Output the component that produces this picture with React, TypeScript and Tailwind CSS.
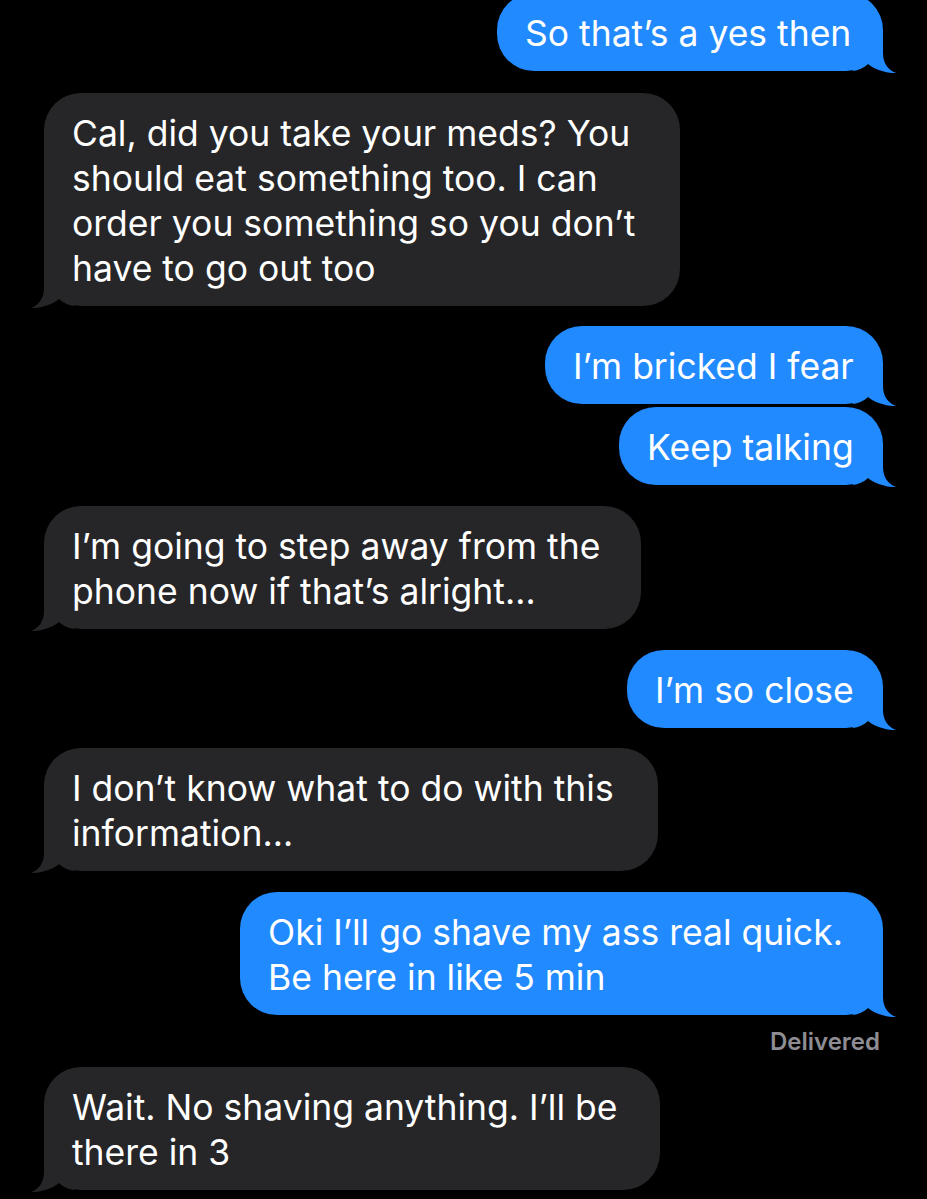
type Msg = {
  from: 'me' | 'them'
  lines: string[]
  width: string
  gap: string
}

const messages: Msg[] = [
  { from: 'me', lines: ['So that’s a yes then'], width: 'w-[386px]', gap: '-mt-[7px]' },
  {
    from: 'them',
    lines: [
      'Cal, did you take your meds? You',
      'should eat something too. I can',
      'order you something so you don’t',
      'have to go out too',
    ],
    width: 'w-[636px]',
    gap: 'mt-[22px]',
  },
  { from: 'me', lines: ['I’m bricked I fear'], width: 'w-[338px]', gap: 'mt-[20px]' },
  { from: 'me', lines: ['Keep talking'], width: 'w-[264px]', gap: 'mt-[3px]' },
  {
    from: 'them',
    lines: ['I’m going to step away from the', 'phone now if that’s alright…'],
    width: 'w-[597px]',
    gap: 'mt-[21px]',
  },
  { from: 'me', lines: ['I’m so close'], width: 'w-[256px]', gap: 'mt-[21px]' },
  {
    from: 'them',
    lines: ['I don’t know what to do with this', 'information…'],
    width: 'w-[614px]',
    gap: 'mt-[20px]',
  },
  {
    from: 'me',
    lines: ['Oki I’ll go shave my ass real quick.', 'Be here in like 5 min'],
    width: 'w-[643px]',
    gap: 'mt-[21px]',
  },
]

const last: Msg = {
  from: 'them',
  lines: ['Wait. No shaving anything. I’ll be', 'there in 3'],
  width: 'w-[616px]',
  gap: 'mt-[12px]',
}

function Tail({ me }: { me: boolean }) {
  // tail drawn over the bottom corner of the bubble
  return (
    <svg
      width="44"
      height="40"
      viewBox="0 0 44 40"
      className={
        me
          ? 'absolute -right-[14px] -bottom-[2px]'
          : 'absolute -left-[14px] -bottom-[2px] -scale-x-100'
      }
    >
      <path
        d="M0 0 H30 V20 C30 30 35 37 43 40 C36 40.5 21 37 15 31 C11 35 5 37.5 0 38 Z"
        fill={me ? '#218aff' : '#262628'}
      />
    </svg>
  )
}

function Bubble({ msg }: { msg: Msg }) {
  const me = msg.from === 'me'
  return (
    <div className={`flex ${me ? 'justify-end' : 'justify-start'} ${msg.gap}`}>
      <div
        className={`relative ${msg.width} rounded-[37px] pl-[28px] pt-[18px] pb-[15px] ${
          me ? 'bg-[#218aff]' : 'bg-[#262628]'
        }`}
      >
        <Tail me={me} />
        <div className="relative text-[35.5px] leading-[45px] text-white">
          {msg.lines.map((l, i) => (
            <div key={i} className="whitespace-nowrap">
              {l}
            </div>
          ))}
        </div>
      </div>
    </div>
  )
}

export default function App() {
  return (
    <div
      className="h-[1199px] w-[927px] overflow-hidden bg-black px-[44px]"
      style={{ fontFamily: 'Inter, "Noto Sans", sans-serif' }}
    >
      {messages.map((m, i) => (
        <Bubble key={i} msg={m} />
      ))}
      <div className="mt-[14px] flex justify-end pr-[3px] text-[24px] font-semibold leading-[26px] text-[#8d8d93]">
        Delivered
      </div>
      <Bubble msg={last} />
    </div>
  )
}
